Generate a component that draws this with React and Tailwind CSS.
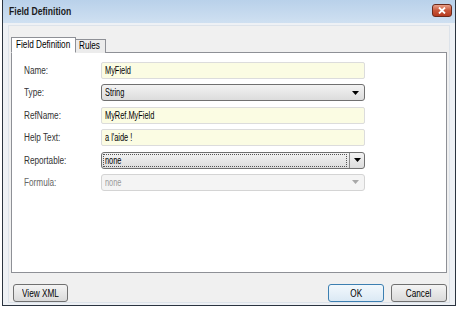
import React from 'react';

const font = { fontFamily: '"Liberation Sans", Arial, sans-serif' };

function Arrow({ color = '#000' }) {
    return (
        <svg width="7" height="4" viewBox="0 0 7 4">
            <path d="M0 0 L7 0 L3.5 4 Z" fill={color} />
        </svg>
    );
}

// squeezed text, the reference glyphs are narrower than Arial
function T({ children, center }) {
    return (
        <span className={center
            ? "inline-block origin-center scale-x-[0.82] whitespace-nowrap"
            : "inline-block origin-left scale-x-[0.82] whitespace-nowrap"}>
            {children}
        </span>
    );
}

function V({ children }) {
    return <span className="inline-block origin-left scale-x-[0.74] whitespace-nowrap">{children}</span>;
}

function Label({ children, muted }) {
    return (
        <div className={muted ? "text-[10px] text-[#666] leading-[17px]" : "text-[10px] text-[#333] leading-[17px]"}>
            <T>{children}</T>
        </div>
    );
}

function TextRow({ label, value }) {
    return (
        <>
            <Label>{label}</Label>
            <div className="h-[17px] w-[264px] border border-[#dcdcdc] rounded-[2px] bg-[#fbfce3] px-[3px] text-[10px] leading-[15px] text-black">
                <V>{value}</V>
            </div>
        </>
    );
}

export default function App() {
    return (
        <div className="w-[459px] h-[311px] bg-white" style={font}>
            <div className="ml-[2px] w-[454px] h-[306px] border-l border-r border-b border-[#2b3440] flex flex-col bg-[#eef1f5]">
                {/* title bar */}
                <div className="h-[23px] shrink-0 flex items-center justify-between pl-[6px] pr-[3px] bg-gradient-to-b from-[#b9d1ea] to-[#cfe0f1]">
                    <span className="text-[10.5px] font-bold text-[#1b1b1b]"><T>Field Definition</T></span>
                    <div className="w-[20px] h-[13px] mt-[-3px] rounded-[3px] border border-[#6b2a1c] bg-gradient-to-b from-[#e8a08a] via-[#c8573b] to-[#b53a1f] flex items-center justify-center">
                        <svg width="8" height="7" viewBox="0 0 8 7">
                            <path d="M1 0.5 L7 6.5 M7 0.5 L1 6.5" stroke="#fff" strokeWidth="1.8" />
                        </svg>
                    </div>
                </div>

                {/* body */}
                <div className="flex-1 px-[5px] pb-[4px] pt-[2px] flex flex-col">
                    <div className="flex-1 border border-[#dde3ea] bg-[#f0f0f0] px-[1px] pt-[11px] flex flex-col">
                        {/* tabs */}
                        <div className="flex items-end h-[16px] ml-[1px] relative z-10">
                            <div className="h-[16px] w-[65px] pl-[4px] bg-white border border-[#8e9096] border-b-white text-[10px] leading-[13px] text-black">
                                <T>Field Definition</T>
                            </div>
                            <div className="h-[14px] w-[30px] pl-[3px] bg-[#ececec] border border-l-0 border-[#8e9096] border-b-0 text-[10px] leading-[12px] text-black">
                                <T>Rules</T>
                            </div>
                        </div>
                        <div className="h-[221px] -mt-[1px] mr-[1px] ml-[1px] border border-[#8e9096] bg-white pl-[12px] pt-[9px]">
                            <div className="grid grid-cols-[77px_264px] gap-y-[5.4px]">
                                <TextRow label="Name:" value="MyField" />

                                <Label>Type:</Label>
                                <div className="h-[17px] w-[264px] border border-[#707070] rounded-[3px] bg-gradient-to-b from-[#f3f3f3] to-[#dcdcdc] pl-[3px] pr-[5px] flex items-center justify-between text-[10px] text-black">
                                    <V>String</V>
                                    <Arrow />
                                </div>

                                <TextRow label="RefName:" value="MyRef.MyField" />
                                <TextRow label="Help Text:" value="a l'aide !" />

                                <Label>Reportable:</Label>
                                <div className="h-[17px] w-[264px] border border-[#707070] rounded-[3px] bg-gradient-to-b from-[#f3f3f3] to-[#dcdcdc] flex items-stretch text-[10px] text-black">
                                    <div className="flex-1 my-[1px] ml-[1px] mr-[2px] border border-dotted border-[#555] leading-[12px] pl-[1px]"><V>none</V></div>
                                    <div className="w-[15px] border-l border-[#8a8a8a] flex items-center justify-center">
                                        <Arrow />
                                    </div>
                                </div>

                                <Label muted>Formula:</Label>
                                <div className="h-[17px] w-[264px] border border-[#d4d4d4] rounded-[3px] bg-[#f4f4f4] pl-[3px] pr-[5px] flex items-center justify-between text-[10px] text-[#9a9a9a]">
                                    <V>none</V>
                                    <Arrow color="#a8a8a8" />
                                </div>
                            </div>
                        </div>

                        {/* buttons */}
                        <div className="flex items-center justify-between pl-[3px] pr-[1px] pt-[11px]">
                            <button className="w-[55px] h-[18px] border border-[#707070] rounded-[3px] bg-gradient-to-b from-[#f4f4f4] to-[#dadada] text-[10px] text-black">
                                <T center>View XML</T>
                            </button>
                            <div className="flex gap-[7px]">
                                <button className="w-[56px] h-[18px] border border-[#3c7fb1] rounded-[3px] bg-gradient-to-b from-[#f2f8fc] to-[#dbe9f4] text-[10px] text-black">
                                    <T center>OK</T>
                                </button>
                                <button className="w-[56px] h-[18px] border border-[#707070] rounded-[3px] bg-gradient-to-b from-[#f4f4f4] to-[#dadada] text-[10px] text-black">
                                    <T center>Cancel</T>
                                </button>
                            </div>
                        </div>
                    </div>
                </div>
            </div>
        </div>
    );
}
